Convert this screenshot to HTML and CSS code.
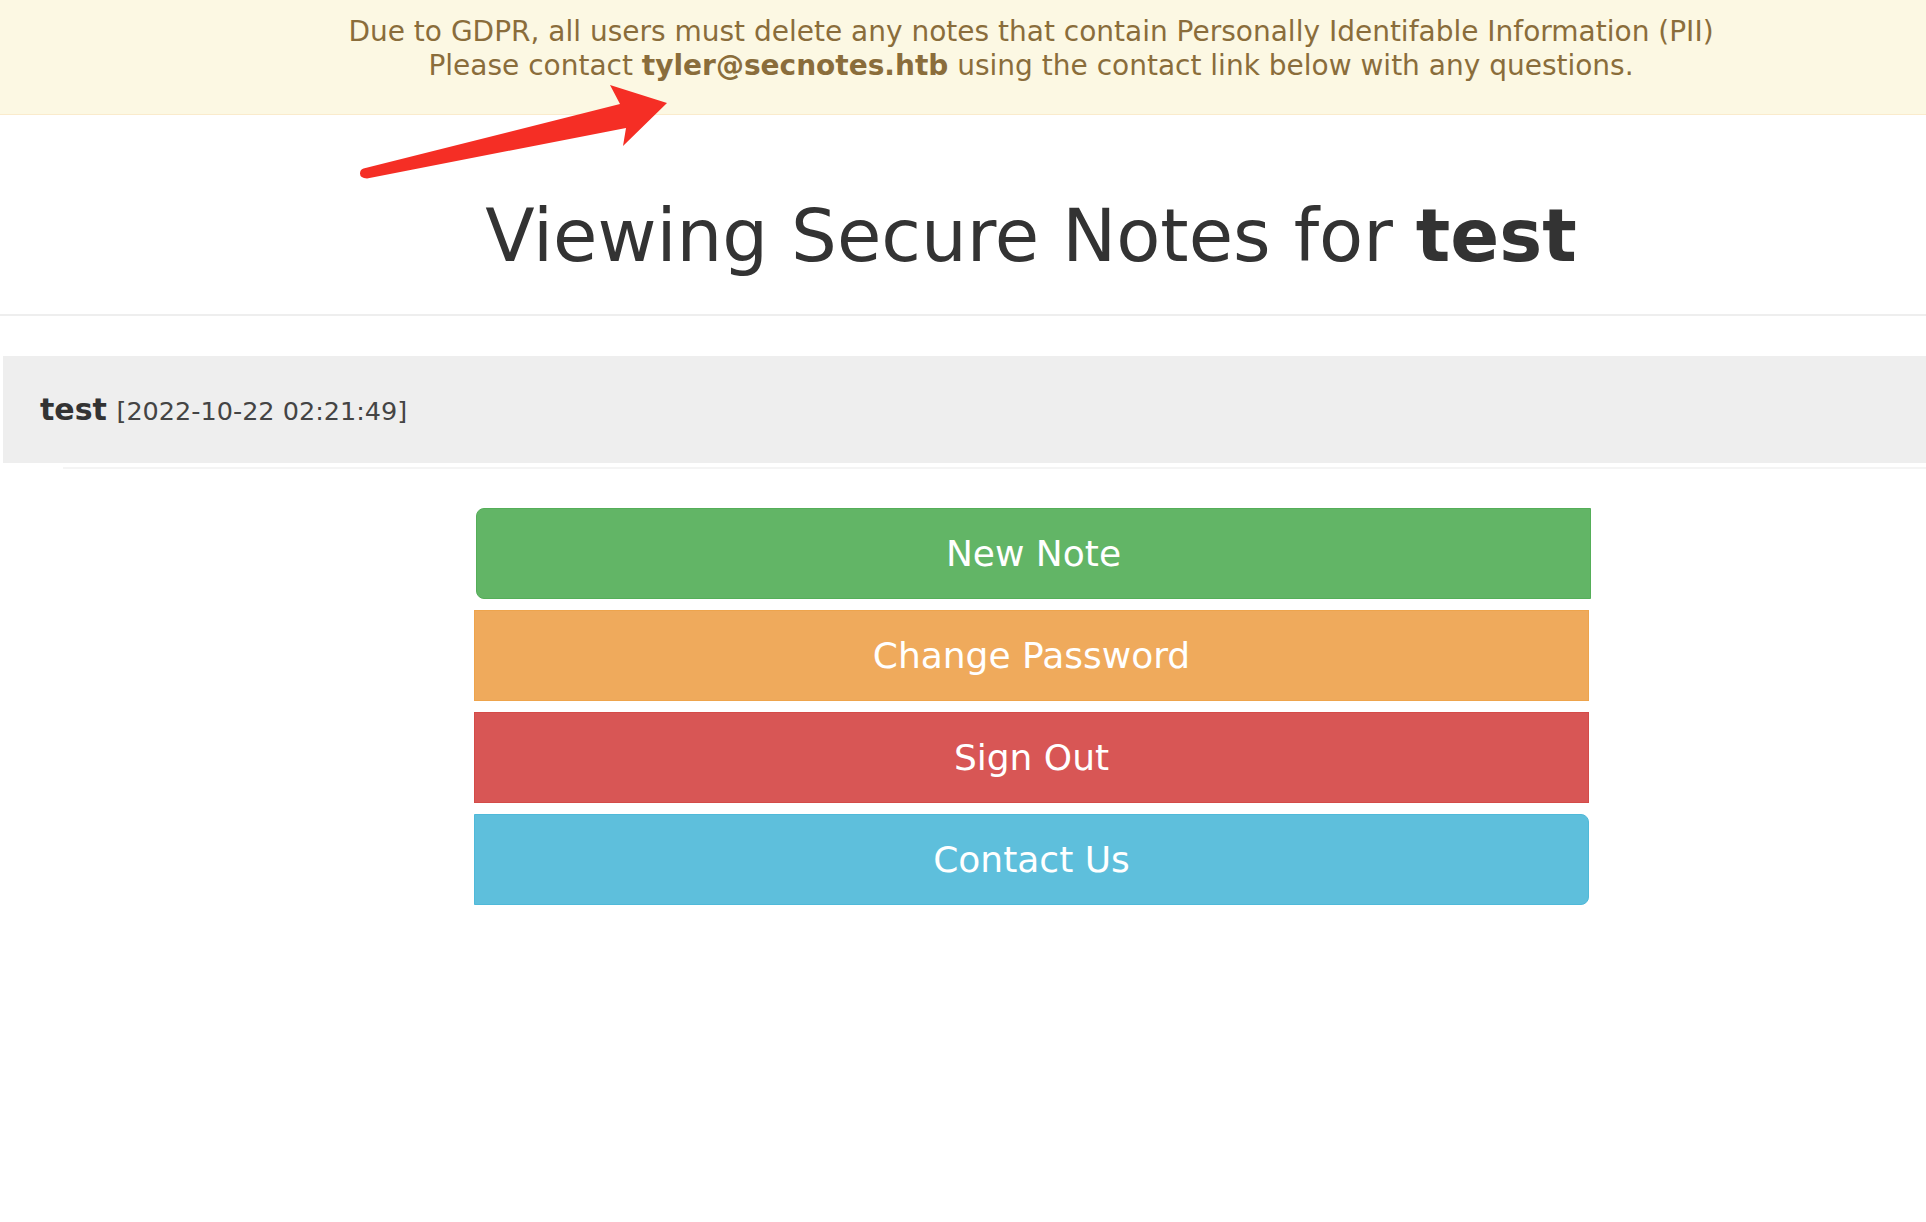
FILE: index.html
```html
<!DOCTYPE html>
<html>
<head>
<meta charset="utf-8">
<title>Secure Notes</title>
<link rel="stylesheet" href="styles.css">
</head>
<body>
<div class="page">
  <div class="alert">
    <div>Due to GDPR, all users must delete any notes that contain Personally Identifable Information (PII)</div>
    <div>Please contact <strong>tyler@secnotes.htb</strong> using the contact link below with any questions.</div>
  </div>
  <h1 class="title">Viewing Secure Notes for <strong>test</strong></h1>
  <hr class="rule">
  <div class="note">
    <strong class="note-title">test</strong> <small class="note-date">[2022-10-22 02:21:49]</small>
  </div>
  <div class="note-line"></div>
  <div class="actions-wrap">
    <div class="actions">
      <a class="btn btn-first btn-green">New Note</a>
      <a class="btn btn-orange">Change Password</a>
      <a class="btn btn-red">Sign Out</a>
      <a class="btn btn-last btn-blue">Contact Us</a>
    </div>
  </div>
</div>
<svg class="arrow" width="320" height="110" viewBox="355 75 320 110" xmlns="http://www.w3.org/2000/svg">
  <path d="M363.5 168.5 L620 104 L610 85 L667 103 L623 146 L626 128 L367 178.5 Q360 178 360 173.5 Q360 169.5 363.5 168.5 Z" fill="#f52e25"/>
</svg>
</body>
</html>
```

FILE: styles.css
```css
html, body {
  margin: 0;
  padding: 0;
  overflow: hidden;
  background: #fff;
}

body {
  font-family: "DejaVu Sans", sans-serif;
  color: #333;
  position: relative;
  height: 1222px;
}

.page {
  width: 100%;
}

.alert {
  background: #fcf8e3;
  border-bottom: 1px solid #faebcc;
  color: #8a6d3b;
  font-size: 28px;
  line-height: 34px;
  text-align: center;
  padding: 15px 0 31px 136px;
}

.alert strong {
  font-weight: bold;
}

.title {
  margin: 81px 0 0;
  padding-left: 136px;
  font-size: 72.2px;
  line-height: 80px;
  font-weight: normal;
  text-align: center;
  color: #333;
}

.title strong {
  font-weight: bold;
}

.rule {
  margin: 38px 0 0;
  border: 0;
  border-top: 2px solid #eee;
  height: 0;
}

.note {
  margin: 40px 0 0 3px;
  background: #eee;
  padding: 37px 37px 36px;
  line-height: 34px;
  height: 34px;
  font-size: 30px;
  color: #333;
}

.note-title {
  font-size: 30px;
  font-weight: bold;
}

.note-date {
  font-size: 25.5px;
  color: #444;
}

.note-line {
  margin: 4px 0 0 63px;
  border-top: 2px solid #f4f4f4;
}

.actions-wrap {
  padding-left: 136px;
  margin-top: 39px;
}

.actions {
  width: 1115px;
  margin: 0 auto;
  padding-left: 1px;
  display: flex;
  flex-direction: column;
  gap: 11px;
}

.btn {
  display: flex;
  align-items: center;
  justify-content: center;
  height: 89px;
  border: 1px solid transparent;
  color: #fff;
  font-size: 36px;
  text-decoration: none;
  border-radius: 0;
}

.btn-first {
  border-radius: 8px 0 0 8px;
  margin-left: 2px;
  margin-right: -2px;
}

.btn-last {
  border-radius: 0 8px 8px 0;
}

.btn-green {
  background: #62b566;
  border-color: #55ae59;
}

.btn-orange {
  background: #efaa5c;
  border-color: #eea44c;
}

.btn-red {
  background: #d85655;
  border-color: #d44b48;
}

.btn-blue {
  background: #5ebfdc;
  border-color: #4fb9d9;
}

.arrow {
  position: absolute;
  left: 355px;
  top: 75px;
}
```
